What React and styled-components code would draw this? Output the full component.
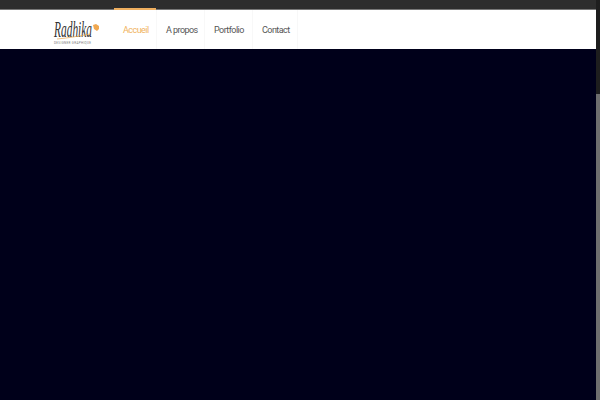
import React from 'react';
import styled, { createGlobalStyle } from 'styled-components';

const Global = createGlobalStyle`
    html, body {
        margin: 0;
        padding: 0;
        height: 100%;
        overflow: hidden;
        background: #00001a;
        font-family: Roboto, "Liberation Sans", sans-serif;
    }
`

const Page = styled.div`
    display: flex;
    width: 600px;
    height: 400px;
`
const Main = styled.div`
    flex: 1;
    display: flex;
    flex-direction: column;
`
const TopBar = styled.div`
    height: 10px;
    background: #2d2d2d;
    border-bottom: 1px solid #777;
    box-sizing: border-box;
`
const Header = styled.header`
    height: 39px;
    background: #fff;
    display: flex;
    padding-left: 52px;
`
const Logo = styled.svg`
    width: 50px;
    height: 30px;
    margin-top: 5px;
    margin-right: 12px;
`
const Nav = styled.nav`
    display: flex;
`
const NavItem = styled.a`
    position: relative;
    display: flex;
    align-items: center;
    box-sizing: border-box;
    width: ${p => p.$w}px;
    height: 100%;
    padding-left: 9px;
    font-size: 9px;
    letter-spacing: -0.55px;
    color: ${p => (p.$active ? '#f0b35e' : '#555')};
    border-right: 1px solid #f8f8f8;
    &::before {
        content: '';
        display: ${p => (p.$active ? 'block' : 'none')};
        position: absolute;
        left: 0;
        right: 0;
        top: -2px;
        height: 2px;
        background: #f0b060;
    }
`
const Hero = styled.main`
    flex: 1;
    background: #00001a;
`
const Scrollbar = styled.div`
    width: 4px;
    background: #1e1e1e;
    display: flex;
    flex-direction: column;
    justify-content: flex-end;
`
const Thumb = styled.div`
    height: 306px;
    background: #6e6e6e;
`

const App = () => {
    return (
        <Page>
            <Global />
            <Main>
                <TopBar />
                <Header>
                    <Logo viewBox="0 0 50 30">
                        <text transform="translate(2 22) scale(0.88 1.7)" fontFamily="Liberation Serif" fontStyle="italic" fontSize="13" fill="#333">Radhika</text>
                        <path d="M41 10l3-1 3 2 0 3-2 2-3-2z" fill="#f0a850" />
                        <path d="M5 24c11-1 23-3 33-5" stroke="#e8a850" strokeWidth="0.7" fill="none" />
                        <text x="2" y="28.5" fontFamily="Roboto" fontSize="3" textLength="37" fill="#777">DESIGNER GRAPHIQUE</text>
                    </Logo>
                    <Nav>
                        <NavItem $active $w={43}>Accueil</NavItem>
                        <NavItem $w={48}>A propos</NavItem>
                        <NavItem $w={48}>Portfolio</NavItem>
                        <NavItem $w={45}>Contact</NavItem>
                    </Nav>
                </Header>
                <Hero />
            </Main>
            <Scrollbar>
                <Thumb />
            </Scrollbar>
        </Page>
    );
};

export default App;
